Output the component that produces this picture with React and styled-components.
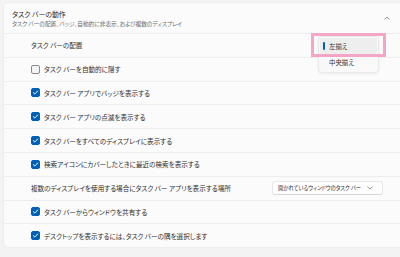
import React from 'react';
import styled, { createGlobalStyle } from 'styled-components';

const GlobalStyle = createGlobalStyle`
  html, body {
    margin: 0;
    padding: 0;
    background: #f3f3f3;
  }
  body {
    font-family: 'Noto Sans CJK JP', 'Noto Sans', sans-serif;
    font-feature-settings: 'palt';
    color: #2e2e2e;
  }
`;

const Page = styled.div`
  position: relative;
  width: 400px;
  height: 257px;
  overflow: hidden;
  padding: 3px 0 0 4px;
  box-sizing: border-box;
`;

const Card = styled.section`
  width: 400px;
  background: #fbfbfb;
  border-radius: 4px 0 0 4px;
  box-shadow: 0 0 0 0.5px #e8e8e8;
`;

const Header = styled.div`
  height: 30px;
  display: flex;
  align-items: center;
  justify-content: space-between;
  padding: 0 14px 0 8px;
`;

const Titles = styled.div`
  display: flex;
  flex-direction: column;
  gap: 1px;
`;

const Title = styled.div`
  font-size: 6.9px;
  line-height: 9px;
  color: #262626;
`;

const Subtitle = styled.div`
  font-size: 5.7px;
  line-height: 7px;
  color: #6a6a6a;
`;

const Row = styled.div`
  height: 22.8px;
  border-top: 1px solid #ededed;
  display: flex;
  align-items: center;
  justify-content: space-between;
  padding: 0 25px 0 27px;
  gap: 5px;
  font-size: 6.6px;
  white-space: nowrap;
`;

const Label = styled.label`
  display: flex;
  align-items: center;
  gap: 4px;
`;

const Box = styled.span`
  width: 9px;
  height: 9px;
  box-sizing: border-box;
  border-radius: 2px;
  display: inline-flex;
  align-items: center;
  justify-content: center;
  background: ${(p) => (p.checked ? '#005fb8' : '#f5f5f5')};
  border: 1px solid ${(p) => (p.checked ? '#005fb8' : '#8a8a8a')};
`;

const Select = styled.div`
  width: 111px;
  height: 14px;
  box-sizing: border-box;
  background: #fefefe;
  border: 1px solid #e6e6e6;
  border-bottom-color: #d6d6d6;
  border-radius: 3px;
  display: flex;
  align-items: center;
  justify-content: space-between;
  padding: 0 9px 0 5px;
  margin-right: -4px;
  font-size: 5.4px;
  letter-spacing: -0.1px;
`;

const Flyout = styled.div`
  position: absolute;
  left: 318px;
  top: 36px;
  width: 61px;
  height: 37px;
  box-sizing: border-box;
  background: #f9f9f9;
  border: 1px solid #e9e9e9;
  border-radius: 4px;
  box-shadow: 0 1px 3px rgba(0, 0, 0, 0.06);
  padding: 1px 1px;
  display: flex;
  flex-direction: column;
  font-size: 6.4px;
`;

const Option = styled.div`
  position: relative;
  height: 16px;
  display: flex;
  align-items: center;
  padding-left: 9px;
  border-radius: 3px;
  background: ${(p) => (p.selected ? '#eeeeee' : 'transparent')};
  &::before {
    content: '';
    display: ${(p) => (p.selected ? 'block' : 'none')};
    position: absolute;
    left: 3px;
    top: 4px;
    width: 2px;
    height: 8px;
    border-radius: 1px;
    background: #005fb8;
  }
`;

const Highlight = styled.div`
  position: absolute;
  left: 311px;
  top: 33px;
  width: 75px;
  height: 24px;
  box-sizing: border-box;
  border: 3px solid #f3a6c7;
`;

const Check = () => (
  <svg width="7" height="7" viewBox="0 0 8 8">
    <path d="M1.5 4.2 L3.2 5.8 L6.6 2.2" fill="none" stroke="#fff" strokeWidth="1.1" strokeLinecap="round" strokeLinejoin="round" />
  </svg>
);

const Chevron = ({ up }) => (
  <svg width="6" height="4" viewBox="0 0 6 4">
    <path d={up ? 'M0.7 3.3 L3 1 L5.3 3.3' : 'M0.7 0.9 L3 3.1 L5.3 0.9'} fill="none" stroke="#666" strokeWidth="0.7" strokeLinecap="round" strokeLinejoin="round" />
  </svg>
);

const CheckItem = ({ checked, children }) => (
  <Row>
    <Label>
      <Box checked={checked}>{checked && <Check />}</Box>
      {children}
    </Label>
  </Row>
);

export default function App() {
  return (
    <>
      <GlobalStyle />
      <Page>
        <Card>
          <Header>
            <Titles>
              <Title>タスク バーの動作</Title>
              <Subtitle>タスク バーの配置、バッジ、自動的に非表示、および複数のディスプレイ</Subtitle>
            </Titles>
            <Chevron up />
          </Header>
          <Row>タスク バーの配置</Row>
          <CheckItem>タスク バーを自動的に隠す</CheckItem>
          <CheckItem checked>タスク バー アプリでバッジを表示する</CheckItem>
          <CheckItem checked>タスク バー アプリの点滅を表示する</CheckItem>
          <CheckItem checked>タスク バーをすべてのディスプレイに表示する</CheckItem>
          <CheckItem checked>検索アイコンにカバーしたときに最近の検索を表示する</CheckItem>
          <Row>
            複数のディスプレイを使用する場合にタスク バー アプリを表示する場所
            <Select>
              開かれているウィンドウのタスク バー
              <Chevron />
            </Select>
          </Row>
          <CheckItem checked>タスク バーからウィンドウを共有する</CheckItem>
          <CheckItem checked>デスクトップを表示するには、タスク バーの隅を選択します</CheckItem>
        </Card>
        <Flyout>
          <Option selected>左揃え</Option>
          <Option>中央揃え</Option>
        </Flyout>
        <Highlight />
      </Page>
    </>
  );
}
